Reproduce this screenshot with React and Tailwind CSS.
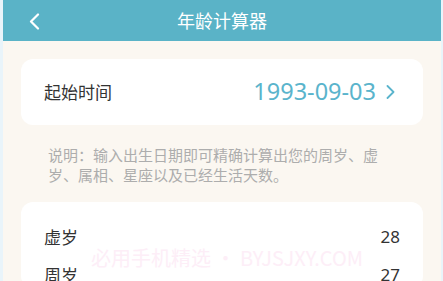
import React from "react";

const App = () => {
  return (
    <div
      className="relative w-[443px] h-[281px] overflow-hidden bg-[#e9f4fa] pl-[3px] pr-[2px]"
      style={{ fontFamily: '"Noto Sans CJK SC", "Noto Sans", sans-serif' }}
    >
      <div className="h-full bg-[#fbf7f1]">
        <div className="relative flex h-[41px] items-center justify-center bg-[#5ab3c7]">
          <svg className="absolute left-[25px] top-[13px]" width="12" height="17" viewBox="0 0 12 17" fill="none">
            <path d="M10 1.5 L3 8.5 L10 15.5" stroke="white" strokeWidth="2.2" strokeLinecap="round" strokeLinejoin="round" />
          </svg>
          <span className="text-[18px] text-white">年龄计算器</span>
        </div>

        <div className="px-[18px] pt-[18px]">
          <div className="flex h-[66px] items-center justify-between rounded-[12px] bg-white pl-[23px] pr-[28px]">
            <span className="text-[17px] text-[#333]">起始时间</span>
            <div className="flex items-center gap-[10px]">
              <span className="text-[23.5px] text-[#5ab4cc]" style={{ fontFamily: '"Noto Sans", sans-serif' }}>1993-09-03</span>
              <svg width="9" height="14" viewBox="0 0 9 14" fill="none">
                <path d="M1.5 1 L7.5 7 L1.5 13" stroke="#5ab4cc" strokeWidth="1.8" strokeLinecap="round" strokeLinejoin="round" />
              </svg>
            </div>
          </div>

          <p className="w-[367px] pl-[27px] pt-[20px] text-[15px] leading-[20px] text-[#adadad]">
            说明：输入出生日期即可精确计算出您的周岁、虚岁、属相、星座以及已经生活天数。
          </p>

          <div className="mt-[17px] rounded-[12px] bg-white pl-[23px] pr-[23px] pt-[22px]">
            <div className="flex h-[26px] items-center justify-between text-[17px] text-[#333]">
              <span>虚岁</span>
              <span style={{ fontFamily: '"Noto Sans", sans-serif' }}>28</span>
            </div>
            <div className="mt-[12px] flex h-[26px] items-center justify-between text-[17px] text-[#333]">
              <span>周岁</span>
              <span style={{ fontFamily: '"Noto Sans", sans-serif' }}>27</span>
            </div>
          </div>
        </div>
      </div>

      <div className="pointer-events-none absolute left-[91px] top-[244px] whitespace-nowrap text-[20px] leading-[28px] text-[#fdeef7]">
        必用手机精选 • BYJSJXY.COM
      </div>
    </div>
  );
};

export default App;
